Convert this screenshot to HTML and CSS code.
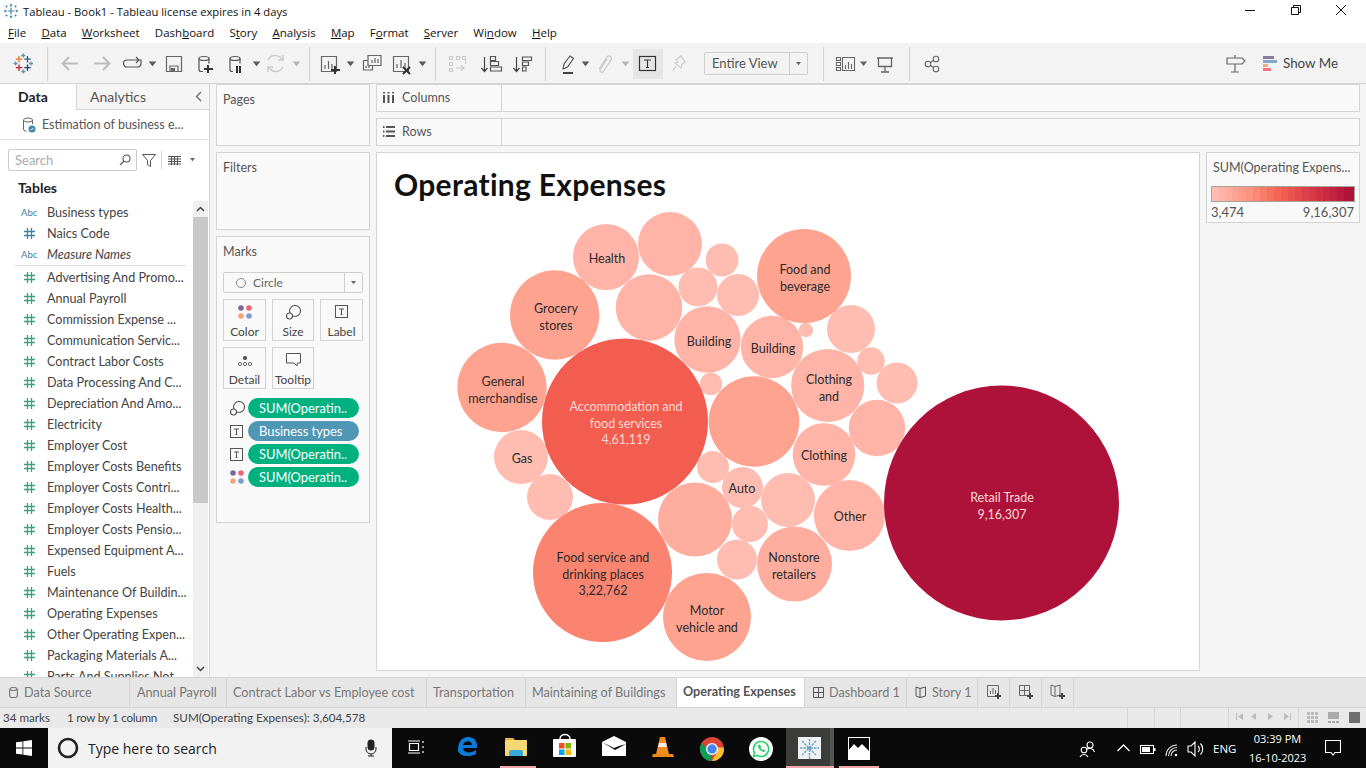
FILE: index.html
```html
<!DOCTYPE html>
<html lang="en">
<head>
<meta charset="utf-8">
<title>Tableau - Book1</title>
<link rel="stylesheet" href="styles.css">
</head>
<body>
<svg class="defs" width="0" height="0" aria-hidden="true">
  <defs>
    <g id="hash" fill="none" stroke-width="1.3"><path d="M3.500 0v11M7.500 0v11M0 3.500h11M0 7.500h11"/></g>
    <g id="tbox" fill="none" stroke="#555"><rect x=".5" y=".5" width="12" height="12"/><path d="M4 4h5M6.500 4v5.500M5.500 9.500h2" /></g>
    <g id="ring" fill="none" stroke="#555" stroke-width="1.100"><circle cx="9" cy="6" r="5.500"/><circle cx="3.500" cy="11" r="3" fill="#fafafa"/></g>
    <g id="dots"><circle cx="3" cy="3" r="2.800" fill="#7c6a96"/><circle cx="11" cy="3" r="2.800" fill="#f0657a"/><circle cx="3" cy="11" r="2.800" fill="#f2a578"/><circle cx="11" cy="11" r="2.800" fill="#7e9fcb"/></g>
    <path id="caret" d="M1 0h5l-2.500 3.200z" fill="#666"/>
  </defs>
</svg>

<header class="titlebar">
  <svg class="app-logo" width="14" height="14" viewBox="0 0 14 14" fill="none" stroke="#3f87ad" stroke-width="1.200"><path d="M7 3.500v7M3.500 7h7M7 0v2.500M5.800 1.200h2.400M7 11.500V14M5.800 12.800h2.400M0 7h2.500M1.200 5.800v2.400M11.500 7H14M12.800 5.800v2.400M2.500 1.500v2M1.500 2.500h2M11.500 1.500v2M10.500 2.500h2M2.500 10.500v2M1.500 11.500h2M11.500 10.500v2M10.500 11.500h2"/></svg>
  <span class="title-text">Tableau - Book1 - Tableau license expires in 4 days</span>
  <div class="winctl">
    <svg width="366" height="22" viewBox="1000 0 366 22" fill="none" stroke="#111"><path d="M1245 10.500h10"/><path d="M1291.500 7.500h7v7h-7zM1293.500 7.500v-2h7v7h-2"/><path d="M1336 5l10 10M1346 5l-10 10"/></svg>
  </div>
</header>

<nav class="menubar">
  <span><u>F</u>ile</span><span><u>D</u>ata</span><span><u>W</u>orksheet</span><span>Dash<u>b</u>oard</span><span>S<u>t</u>ory</span><span><u>A</u>nalysis</span><span><u>M</u>ap</span><span>F<u>o</u>rmat</span><span><u>S</u>erver</span><span>Wi<u>n</u>dow</span><span><u>H</u>elp</span>
</nav>

<div class="toolbar">
  <svg class="tb-a" width="700" height="41" viewBox="0 43 700 41" fill="none" stroke="#555" stroke-width="1.200">
    <g stroke-width="1.300">
      <path d="M19 56v6.500M15.800 59.200h6.500" stroke="#e8762b"/>
      <path d="M27.500 56v6.500M24.300 59.200h6.500" stroke="#2b5b84"/>
      <path d="M19 64.500V71M15.800 67.700h6.500" stroke="#c72035"/>
      <path d="M27.500 64.500V71M24.300 67.700h6.500" stroke="#1f447a"/>
      <path d="M23.300 53.500v4M21.300 55.500h4M23.300 69.500v4M21.300 71.500h4" stroke="#5f93a8"/>
      <path d="M15.500 61.500v4M13.500 63.500h4M31 61.500v4M29 63.500h4" stroke="#6f8fb0"/>
    </g>
    <path d="M47.500 47v34M309.500 47v34M435.500 47v34M545.500 47v34" stroke="#d4d4d4"/>
    <g stroke="#bdbdbd" stroke-width="2"><path d="M78 63.500H63M69 57l-6.500 6.500L69 70"/><path d="M94 63.500h15M103 57l6.500 6.500L103 70"/></g>
    <path d="M137 60h-10a3.500 3.500 0 0 0 0 7h11a3.500 3.500 0 0 0 3-3.500V60h-5M136 57l3 3-3 3"/>
    <use href="#caret" x="149" y="62"/>
    <path d="M166.500 56.500h15v15h-15zM170 71v-5h8v5" stroke="#666"/><rect x="171" y="68" width="4" height="3" fill="#666" stroke="none"/>
    <g><ellipse cx="204" cy="58.500" rx="5" ry="2"/><path d="M199 58.500v11a2 2 0 0 0 2 2h2M209 58.500v5"/></g>
    <path d="M208 65v8M204 69h9" stroke="#333" stroke-width="2"/>
    <ellipse cx="235" cy="58.500" rx="5" ry="2"/><path d="M230 58.500v11a2 2 0 0 0 2 2h1M240 58.500v5"/>
    <path d="M237 66v7M240 66v7" stroke="#333" stroke-width="2"/>
    <use href="#caret" x="253" y="62"/>
    <g stroke="#ccc" stroke-width="1.500"><path d="M268 60a8 8 0 0 1 13-2l2 2M283 67a8 8 0 0 1-13 2l-2-2M283 55v5h-5M268 72v-5h5"/></g>
    <use href="#caret" x="293" y="62" opacity=".4"/>
    <path d="M321.500 56.500h15v15h-15zM325 69v-4M328.500 69v-8M332 69v-5" stroke="#666"/>
    <path d="M335 66v8M331 70h9" stroke="#333" stroke-width="2"/>
    <use href="#caret" x="347" y="62"/>
    <path d="M368 55.500h13v10h-13zM372 63v-3M375 63v-5M378 63v-4" stroke="#666"/><path d="M363.500 60.500H368M363.500 60.500v9.500h9v-4M366 68v-2M369 68v-2" stroke="#666"/>
    <path d="M393.500 56.500h15v15h-15zM397 68v-4M401 68v-8M405 68v-5" stroke="#666"/>
    <path d="M403 67l7 7M410 67l-7 7" stroke="#333" stroke-width="2"/>
    <use href="#caret" x="419" y="62"/>
    <g stroke="#ccc"><path d="M449.500 56.500h3v3h-3zM449.500 62.500h3v3h-3zM449.500 68.500h3v3h-3zM456.500 56.500h3v3h-3zM462.500 56.500h3v3h-3zM456 68h8M461 65.500l3 2.500-3 2.500M465.500 60v4"/></g>
    <path d="M484.500 57v14M481.500 68l3 3.500 3-3.500" stroke="#444"/><path d="M490.500 56.500h5v4h-5zM490.500 61.500h8v4h-8zM490.500 67h11v4h-11z"/>
    <path d="M516.500 57v14M513.500 68l3 3.500 3-3.500" stroke="#444"/><path d="M522.500 57h9v3.500h-9zM522.500 62h6v3.500h-6zM522.500 67h3.500v4h-3.500z"/>
    <path d="M563 73h10" stroke="#444" stroke-width="2"/><path d="M563 69l1-5 6-8 3.500 2.500-6 8.500-4 2z"/>
    <use href="#caret" x="582" y="62"/>
    <path d="M599 69l8-12a2.500 2.500 0 0 1 4 3l-8 12a2 2 0 0 1-3-2l7-11" stroke="#ccc" stroke-width="1.300"/>
    <use href="#caret" x="622" y="62" opacity=".4"/>
    <rect x="633" y="49" width="30" height="30" fill="#e6e6e6" stroke="none"/>
    <rect x="639.500" y="56.500" width="16" height="14" stroke="#333"/><path d="M644 60h7M647.500 60v7.500M646 67.500h3" stroke="#333"/>
    <path d="M676 60l5-4 4 6-3 2-1 4-6-5 3-1zM676 66l-3 5" stroke="#ccc"/>
  </svg>
  <div class="fit-combo"><span class="fit-label">Entire View</span><span class="fit-btn"><svg width="7" height="4"><use href="#caret"/></svg></span></div>
  <svg class="tb-b" width="140" height="41" viewBox="810 43 140 41" fill="none" stroke="#666" stroke-width="1.100">
    <path d="M823.500 47v34M909.500 47v34" stroke="#d4d4d4"/>
    <path d="M836.500 57.500h4v3h-4zM836.500 62.500h4v3h-4zM836.500 67.500h4v3h-4zM842.500 57.500h12v13h-12z"/><path d="M845.500 69v-4M848.500 69v-7M851.500 69v-5"/>
    <use href="#caret" x="860" y="62"/>
    <path d="M877 58h16M878.500 58v8.500h13V58M885 66.500v5.500M881 72h8" stroke-width="1.300"/>
    <circle cx="928" cy="64" r="2.800"/><circle cx="936" cy="59" r="2.800"/><circle cx="936" cy="69" r="2.800"/><path d="M930.500 62.500l3-2M930.500 65.500l3 2"/>
  </svg>
  <div class="tb-right">
    <svg width="60" height="41" viewBox="1222 43 60 41" fill="none" stroke="#666" stroke-width="1.200">
      <path d="M1227 58h15l3 3-3 3h-15zM1235 55v3M1235 64v8M1231 72h8"/>
      <rect x="1263" y="56" width="11" height="3" fill="#8b7ba0" stroke="none"/><rect x="1263" y="60" width="14" height="3" fill="#85a5cd" stroke="none"/><rect x="1263" y="64" width="5" height="3" fill="#f4ab7f" stroke="none"/><rect x="1263" y="68" width="8" height="3" fill="#f5727f" stroke="none"/>
    </svg>
    <span class="showme">Show Me</span>
  </div>
</div>

<main class="main">
  <aside class="sidebar">
    <div class="side-tabs">
      <div class="side-tab active">Data</div>
      <div class="side-tab">Analytics<svg class="collapse" width="7" height="11" viewBox="0 0 7 11" fill="none" stroke="#666" stroke-width="1.200"><path d="M6 1L1.500 5.500 6 10"/></svg></div>
    </div>
    <div class="source">
      <svg width="14" height="16" viewBox="0 0 14 16" fill="none" stroke="#666"><ellipse cx="6" cy="3" rx="4.500" ry="2"/><path d="M1.500 3v9a2 2 0 0 0 2 2h1M10.500 3v4"/><circle cx="10" cy="12" r="3.500" fill="#3f87ad" stroke="none"/><path d="M8.500 12l1 1 2-2" stroke="#fff"/></svg>
      <span>Estimation of business e...</span>
    </div>
    <div class="searchrow">
      <div class="searchbox"><span>Search</span><svg width="12" height="12" viewBox="0 0 12 12" fill="none" stroke="#555" stroke-width="1.100"><circle cx="7.500" cy="4.500" r="3.500"/><path d="M5 7l-4 4"/></svg></div>
      <svg class="funnel" width="14" height="13" viewBox="0 0 14 13" fill="none" stroke="#555"><path d="M.5 .5h13L8.500 6.500V12.500L5.500 10.500V6.500z"/></svg>
      <span class="vsep"></span>
      <svg class="listicon" width="13" height="9" viewBox="0 0 13 9" fill="none" stroke="#555"><path d="M0 .5h13M0 3h13M0 5.500h13M0 8h13M3.500 0v9M6.500 0v9M9.500 0v9"/></svg>
      <svg class="listcaret" width="7" height="4"><use href="#caret"/></svg>
    </div>
    <div class="tables-h">Tables</div>
    <div class="fields-wrap">
      <div class="fields">
        <div class="field"><span class="abc">Abc</span>Business types</div>
        <div class="field"><svg class="fi dim" width="11" height="11"><use href="#hash"/></svg>Naics Code</div>
        <div class="field ital"><span class="abc">Abc</span>Measure Names</div>
        <div class="divider"></div>
        <div class="field"><svg class="fi" width="11" height="11"><use href="#hash"/></svg>Advertising And Promo...</div>
        <div class="field"><svg class="fi" width="11" height="11"><use href="#hash"/></svg>Annual Payroll</div>
        <div class="field"><svg class="fi" width="11" height="11"><use href="#hash"/></svg>Commission Expense ...</div>
        <div class="field"><svg class="fi" width="11" height="11"><use href="#hash"/></svg>Communication Servic...</div>
        <div class="field"><svg class="fi" width="11" height="11"><use href="#hash"/></svg>Contract Labor Costs</div>
        <div class="field"><svg class="fi" width="11" height="11"><use href="#hash"/></svg>Data Processing And C...</div>
        <div class="field"><svg class="fi" width="11" height="11"><use href="#hash"/></svg>Depreciation And Amo...</div>
        <div class="field"><svg class="fi" width="11" height="11"><use href="#hash"/></svg>Electricity</div>
        <div class="field"><svg class="fi" width="11" height="11"><use href="#hash"/></svg>Employer Cost</div>
        <div class="field"><svg class="fi" width="11" height="11"><use href="#hash"/></svg>Employer Costs Benefits</div>
        <div class="field"><svg class="fi" width="11" height="11"><use href="#hash"/></svg>Employer Costs Contri...</div>
        <div class="field"><svg class="fi" width="11" height="11"><use href="#hash"/></svg>Employer Costs Health...</div>
        <div class="field"><svg class="fi" width="11" height="11"><use href="#hash"/></svg>Employer Costs Pensio...</div>
        <div class="field"><svg class="fi" width="11" height="11"><use href="#hash"/></svg>Expensed Equipment A...</div>
        <div class="field"><svg class="fi" width="11" height="11"><use href="#hash"/></svg>Fuels</div>
        <div class="field"><svg class="fi" width="11" height="11"><use href="#hash"/></svg>Maintenance Of Buildin...</div>
        <div class="field"><svg class="fi" width="11" height="11"><use href="#hash"/></svg>Operating Expenses</div>
        <div class="field"><svg class="fi" width="11" height="11"><use href="#hash"/></svg>Other Operating Expen...</div>
        <div class="field"><svg class="fi" width="11" height="11"><use href="#hash"/></svg>Packaging Materials A...</div>
        <div class="field"><svg class="fi" width="11" height="11"><use href="#hash"/></svg>Parts And Supplies Not...</div>
      </div>
      <div class="scrollbar">
        <div class="sb-btn"><svg width="9" height="6" viewBox="0 0 9 6" fill="none" stroke="#444" stroke-width="1.500"><path d="M1 5l3.500-3.500L8 5"/></svg></div>
        <div class="sb-track"><div class="sb-thumb"></div></div>
        <div class="sb-btn"><svg width="9" height="6" viewBox="0 0 9 6" fill="none" stroke="#444" stroke-width="1.500"><path d="M1 1l3.500 3.500L8 1"/></svg></div>
      </div>
    </div>
  </aside>

  <section class="cards">
    <div class="card pages"><div class="card-h">Pages</div></div>
    <div class="card filters"><div class="card-h">Filters</div></div>
    <div class="card marks">
      <div class="card-h">Marks</div>
      <div class="marktype">
        <span class="mt-label"><i class="mt-ring"></i>Circle</span>
        <span class="mt-btn"><svg width="7" height="4"><use href="#caret"/></svg></span>
      </div>
      <div class="markbtns">
        <div class="mbtn"><svg width="14" height="14"><use href="#dots"/></svg><span>Color</span></div>
        <div class="mbtn"><svg width="15" height="15"><use href="#ring"/></svg><span>Size</span></div>
        <div class="mbtn"><svg width="13" height="13"><use href="#tbox"/></svg><span>Label</span></div>
        <div class="mbtn"><svg width="14" height="14" viewBox="0 0 14 14" fill="none" stroke="#555" stroke-width=".9"><circle cx="7" cy="5" r="1.700" fill="#555"/><circle cx="2" cy="11" r="1.600"/><circle cx="7" cy="11" r="1.600"/><circle cx="12" cy="11" r="1.600"/></svg><span>Detail</span></div>
        <div class="mbtn"><svg width="15" height="14" viewBox="0 0 15 14" fill="none" stroke="#555"><path d="M.5 .5h14v9.500h-3l-.5 3-3-3h-7.500z"/></svg><span>Tooltip</span></div>
      </div>
      <div class="pills">
        <div class="pillrow"><svg width="15" height="15"><use href="#ring"/></svg><span class="pill green">SUM(Operatin..</span></div>
        <div class="pillrow"><svg width="13" height="13"><use href="#tbox"/></svg><span class="pill blue">Business types</span></div>
        <div class="pillrow"><svg width="13" height="13"><use href="#tbox"/></svg><span class="pill green">SUM(Operatin..</span></div>
        <div class="pillrow"><svg width="14" height="14"><use href="#dots"/></svg><span class="pill green">SUM(Operatin..</span></div>
      </div>
    </div>
  </section>

  <section class="work">
    <div class="shelf"><div class="shelf-h"><svg width="12" height="11" viewBox="0 0 12 11" fill="#555"><rect width="2" height="8" x="0" y="3"/><rect width="2" height="8" x="4.500" y="3"/><rect width="2" height="8" x="9" y="3"/><rect width="2" height="1.500" x="0"/><rect width="2" height="1.500" x="4.500"/><rect width="2" height="1.500" x="9"/></svg>Columns</div></div>
    <div class="shelf"><div class="shelf-h"><svg width="12" height="11" viewBox="0 0 12 11" fill="#555"><rect width="9" height="2" x="3" y="0"/><rect width="9" height="2" x="3" y="4.500"/><rect width="9" height="2" x="3" y="9"/><rect width="1.500" height="2" y="0"/><rect width="1.500" height="2" y="4.500"/><rect width="1.500" height="2" y="9"/></svg>Rows</div></div>
    <div class="viewrow">
      <div class="chart">
        <h1 class="viz-title">Operating Expenses</h1>
        <svg class="bubbles" width="822" height="517" viewBox="377 153 822 517">
          <g class="c1">
            <circle cx="670" cy="244" r="32"/><circle cx="606" cy="257" r="33"/><circle cx="649" cy="307.500" r="33.300"/><circle cx="707.500" cy="339.500" r="33.200"/><circle cx="772" cy="347" r="31.200"/><circle cx="827.700" cy="385.500" r="36.600"/><circle cx="877" cy="428" r="28.200"/><circle cx="824" cy="454.500" r="31.300"/><circle cx="849.500" cy="515.500" r="35.500"/>
          </g>
          <g class="c1b"><circle cx="695" cy="519.500" r="37"/><circle cx="794.500" cy="564" r="37.500"/></g>
          <g class="c0">
            <circle cx="722" cy="260" r="16.500"/><circle cx="698" cy="287" r="19.500"/><circle cx="738" cy="295" r="21"/><circle cx="806" cy="330" r="7.200"/><circle cx="851" cy="329" r="24"/><circle cx="871" cy="361" r="13.700"/><circle cx="897" cy="383" r="20.500"/><circle cx="711" cy="384" r="11.200"/><circle cx="521" cy="457" r="27"/><circle cx="550" cy="497" r="23"/><circle cx="713" cy="467" r="16"/><circle cx="742.500" cy="487.500" r="20.500"/><circle cx="788" cy="500" r="27"/><circle cx="750" cy="524" r="18"/><circle cx="737" cy="559.500" r="20"/>
          </g>
          <g class="c2">
            <circle cx="502" cy="387.500" r="44.700"/><circle cx="554.700" cy="315" r="44.700"/><circle cx="804" cy="276" r="47"/><circle cx="754" cy="421.500" r="45.300"/><circle cx="707" cy="617" r="44"/>
          </g>
          <circle class="c3" cx="602.500" cy="572.500" r="69.500"/>
          <circle class="c4" cx="625" cy="421.500" r="83"/>
          <circle class="c5" cx="1001.500" cy="503" r="117.500"/>
          <g class="lbl" transform="translate(0 1)">
            <text x="607" y="262">Health</text>
            <text x="805" y="273">Food and</text><text x="805" y="290">beverage</text>
            <text x="556" y="312">Grocery</text><text x="556" y="329">stores</text>
            <text x="709" y="345">Building</text><text x="773" y="352">Building</text>
            <text x="503" y="385">General</text><text x="503" y="402">merchandise</text>
            <text x="829" y="383">Clothing</text><text x="829" y="400">and</text>
            <text x="522" y="462">Gas</text><text x="824" y="459">Clothing</text><text x="742" y="492">Auto</text><text x="850" y="520">Other</text>
            <text x="603" y="561">Food service and</text><text x="603" y="578">drinking places</text><text x="603" y="594">3,22,762</text>
            <text x="794" y="561">Nonstore</text><text x="794" y="578">retailers</text>
            <text x="707" y="614">Motor</text><text x="707" y="631">vehicle and</text>
          </g>
          <g class="lbl light" transform="translate(0 1)">
            <text x="626" y="410">Accommodation and</text><text x="626" y="427">food services</text><text x="626" y="443">4,61,119</text>
            <text x="1002" y="501">Retail Trade</text><text x="1002" y="518">9,16,307</text>
          </g>
        </svg>
      </div>
      <div class="legend">
        <div class="legend-h">SUM(Operating Expens...</div>
        <svg class="ramp" width="144" height="16" viewBox="0 0 144 16">
          <g><rect x="0" width="8" height="16" fill="#ffbdb2"/><rect x="7" width="8" height="16" fill="#ffb5a9"/><rect x="14" width="8" height="16" fill="#ffac9e"/><rect x="21" width="8" height="16" fill="#ffa494"/><rect x="28" width="8" height="16" fill="#fd9a88"/><rect x="35" width="8" height="16" fill="#fc927f"/><rect x="42" width="8" height="16" fill="#fa8875"/><rect x="49" width="8" height="16" fill="#f87c6a"/><rect x="56" width="8" height="16" fill="#f5715f"/><rect x="63" width="8" height="16" fill="#f36655"/><rect x="70" width="8" height="16" fill="#f15d4e"/><rect x="77" width="8" height="16" fill="#e95350"/><rect x="84" width="8" height="16" fill="#e34a4c"/><rect x="91" width="8" height="16" fill="#dc414a"/><rect x="98" width="8" height="16" fill="#d63a47"/><rect x="105" width="8" height="16" fill="#d03244"/><rect x="112" width="8" height="16" fill="#c92a41"/><rect x="119" width="8" height="16" fill="#c2233e"/><rect x="126" width="8" height="16" fill="#ba1b3c"/><rect x="133" width="11" height="16" fill="#b0133a"/></g>
          <rect x=".5" y=".5" width="143" height="15" fill="none" stroke="#a8a398"/>
        </svg>
        <div class="legend-vals"><span>3,474</span><span>9,16,307</span></div>
      </div>
    </div>
  </section>
</main>

<div class="tabstrip">
  <div class="tab w-ds"><svg width="9" height="11" viewBox="0 0 9 11" fill="none" stroke="#666"><ellipse cx="4.500" cy="2" rx="3.800" ry="1.500"/><path d="M.7 2v7a1.500 1.500 0 0 0 1.500 1.500h4.600A1.500 1.500 0 0 0 8.300 9V2"/></svg>Data Source</div>
  <div class="tab w-ap">Annual Payroll</div>
  <div class="tab w-cl">Contract Labor vs Employee cost</div>
  <div class="tab w-tr">Transportation</div>
  <div class="tab w-mb">Maintaining of Buildings</div>
  <div class="tab w-oe active">Operating Expenses</div>
  <div class="tab w-db"><svg width="11" height="11" viewBox="0 0 11 11" fill="none" stroke="#555"><path d="M.5 .5h10v10H.5zM5.500 .5v10M.5 5.500h10"/></svg>Dashboard 1</div>
  <div class="tab w-st"><svg width="12" height="12" viewBox="0 0 12 12" fill="none" stroke="#555"><path d="M1 1l4 1.500L10.500 1v9L5 11.500 1 10zM5 2.500v9"/></svg>Story 1</div>
  <div class="tab w-nw"><svg width="16" height="16" viewBox="0 0 16 16" fill="none" stroke="#666"><path d="M1.500 1.500h11v11h-11zM4.500 10V7M7 10V4M9.500 10V6"/><path d="M12 9v6M9 12h6" stroke="#444" stroke-width="2"/></svg></div>
  <div class="tab w-nw"><svg width="16" height="16" viewBox="0 0 16 16" fill="none" stroke="#666"><path d="M1.500 1.500h10v10h-10zM6.500 1.500v10M1.500 6.500h10"/><path d="M12 9v6M9 12h6" stroke="#444" stroke-width="2"/></svg></div>
  <div class="tab w-nw"><svg width="16" height="16" viewBox="0 0 16 16" fill="none" stroke="#666"><path d="M1 1l4 1.500L10 1v10l-5 1.500L1 11zM5 2.500v10"/><path d="M12 9v6M9 12h6" stroke="#444" stroke-width="2"/></svg></div>
</div>

<div class="status">
  <span class="st-a">34 marks</span><span class="st-b">1 row by 1 column</span><span class="st-c">SUM(Operating Expenses): 3,604,578</span>
  <svg class="st-icons" width="240" height="20" viewBox="1126 708 240 20" fill="#bbb">
    <path d="M1127.500 708v20M1154.500 708v20M1180.500 708v20M1228.500 708v20M1298.500 708v20" stroke="#d4d4d4" fill="none"/>
    <path d="M1236 713v7h1v-7zM1243 713l-5 3.500 5 3.500zM1256 713l-5 3.500 5 3.500zM1268 713l5 3.500-5 3.500zM1284 713l5 3.500-5 3.500zM1290 713v7h1v-7z"/>
    <path d="M1307 712h3v3h-3zM1311 712h3v3h-3zM1315 712h3v3h-3zM1307 716h3v3h-3zM1311 716h3v3h-3zM1315 716h3v3h-3zM1307 720h3v3h-3zM1311 720h3v3h-3zM1315 720h3v3h-3z" fill="#bbb"/>
    <path d="M1328 712h11v7h-11zM1328 721h3v2h-3zM1332 721h3v2h-3zM1336 721h3v2h-3z" fill="#aaa"/>
    <rect x="1349" y="712" width="11" height="11" fill="#6e6e6e"/>
  </svg>
</div>

<footer class="taskbar">
  <div class="start"><svg width="16" height="16" viewBox="0 0 16 16" fill="#fff"><path d="M0 2.300l6.500-.9v6.200H0zM7.300 1.300L16 0v7.600H7.300zM0 8.400h6.500v6.200L0 13.700zM7.300 8.400H16V16l-8.700-1.200z"/></svg></div>
  <div class="tsearch">
    <svg class="cortana" width="22" height="22" viewBox="0 0 22 22" fill="none" stroke="#222" stroke-width="2.600"><circle cx="11" cy="11" r="9"/></svg>
    <span>Type here to search</span>
    <svg class="mic" width="12" height="18" viewBox="0 0 12 18" fill="none" stroke="#222"><rect x="3" y="1" width="6" height="10" rx="2.500" fill="#222"/><path d="M1 8v2a5 5 0 0 0 10 0V8M6 15v2M3 17h6"/></svg>
  </div>
  <svg class="tapps" width="500" height="40" viewBox="392 728 500 40">
    <g fill="none" stroke="#fff" stroke-width="1.200"><path d="M409.500 743.500h9v7h-9zM408 741h12M408 753h12M423 741v2M423 746v2M423 751v2"/></g>
    <path d="M458 750c0-8 4-13 10-13 6 0 9 4 9 9v2h-14c.5 5 8 6 13 2v4c-7 4-18 2-18-4zm5-5h9c0-5-8-5-9 0z" fill="#0a7bd6"/>
    <rect x="505" y="740" width="22" height="16" rx="1" fill="#f8d775"/><path d="M505 738h8l2 2h-10z" fill="#e7b53d"/><path d="M509 756v-4a2 2 0 0 1 2-2h10a2 2 0 0 1 2 2v4z" fill="#39a9dc"/>
    <rect x="553" y="739" width="23" height="18" rx="1" fill="#fff"/><path d="M560 739c0-6 10-6 10 0" fill="none" stroke="#fff" stroke-width="1.500"/><rect x="559" y="743" width="5.500" height="5.500" fill="#f25022"/><rect x="565.500" y="743" width="5.500" height="5.500" fill="#7fba00"/><rect x="559" y="749.500" width="5.500" height="5.500" fill="#00a4ef"/><rect x="565.500" y="749.500" width="5.500" height="5.500" fill="#ffb900"/>
    <path d="M602 742l12-6 12 6v14h-24z" fill="#fff"/><path d="M602 742l13 8 11-6-7 2-5 2z" fill="#0a0a0a"/>
    <path d="M660 737h5l4 17h-13z" fill="#f28c1e"/><path d="M659 743h7l1 4h-9z" fill="#eee"/><path d="M653 754h20l1 3h-22z" fill="#ee8a1a"/>
    <circle cx="712" cy="749" r="12" fill="#db4437"/><path d="M712 761a12 12 0 0 1-10.400-18L708 749l4 6z" fill="#0f9d58"/><path d="M724 749a12 12 0 0 1-12 12l4.500-8 1-5.500h6z" fill="#fbc02d"/><circle cx="712" cy="749" r="6" fill="#fff"/><circle cx="712" cy="749" r="4.700" fill="#4285f4"/>
    <circle cx="761" cy="749" r="12" fill="#fff"/><path d="M761 741.500a7.500 7.500 0 0 0-6.500 11.200l-1 3.800 3.900-1a7.500 7.500 0 1 0 3.600-14z" fill="none" stroke="#25d366" stroke-width="1.600"/><path d="M758 745c-1 2 3 7 6 7l1.500-1.500-2-1.300-1 .7-2-2 .7-1-1.300-2.400z" fill="#25d366"/>
    <rect x="786" y="728" width="44" height="40" fill="#3c3c3a"/><rect x="830" y="728" width="4" height="40" fill="#555"/>
    <rect x="798" y="737" width="23" height="22" fill="#edf1f4"/><g stroke="#6ba3c4" stroke-width="1.400" stroke-dasharray="2.500 1"><path d="M809.500 739v20M800 748h19M802 741l14 14M816 741l-14 14"/></g>
    <rect x="848.500" y="737.500" width="21" height="22" fill="#0a0a0a" stroke="#fff"/><path d="M848 759v-8l6-7 4 4 4-4 8 8v7z" fill="#fff"/>
    <rect x="500" y="766" width="36" height="2" fill="#f4a6ac"/><rect x="786" y="766" width="48" height="2" fill="#f4a6ac"/><rect x="839" y="766" width="40" height="2" fill="#f4a6ac"/>
  </svg>
  <div class="tray">
    <svg width="136" height="40" viewBox="1078 728 136 40" fill="none" stroke="#fff" stroke-width="1.100">
      <circle cx="1090" cy="745" r="3"/><circle cx="1084" cy="750" r="2.800"/><path d="M1080 757a4.500 4.500 0 0 1 8 0M1086 750a5 5 0 0 1 8.500 2"/>
      <path d="M1117.500 751l6-6 6 6" stroke-width="1.300"/>
      <rect x="1140.500" y="745.500" width="13" height="8"/><rect x="1142" y="747" width="8" height="5" fill="#fff" stroke="none"/><rect x="1154" y="748" width="1.500" height="3" fill="#fff" stroke="none"/>
      <path d="M1166 756a11 11 0 0 1 11-11M1168.500 756a8.500 8.500 0 0 1 8.500-8.500M1171 756a6 6 0 0 1 6-6" stroke="#ddd"/><circle cx="1176" cy="755" r="1.300" fill="#fff" stroke="none"/>
      <path d="M1188 746v6h3l4 4v-14l-4 4zM1198 746a4 4 0 0 1 0 6M1200.500 743.500a8 8 0 0 1 0 11"/>
    </svg>
    <span class="eng">ENG</span>
    <div class="clock"><div>03:39 PM</div><div>16-10-2023</div></div>
    <svg class="notif" width="16" height="16" viewBox="0 0 16 16" fill="none" stroke="#fff" stroke-width="1.100"><path d="M.5 .5h15v12h-5.500L8 15l-2-2.500H.5z"/></svg>
  </div>
</footer>
</body>
</html>
```
FILE: styles.css
```css
* { box-sizing: border-box; }
html, body { margin: 0; padding: 0; }
body {
  width: 1366px; height: 768px; overflow: hidden;
  background: #f5f5f5; color: #333;
  font-family: "Lato", "Open Sans", sans-serif; font-size: 13px;
  display: flex; flex-direction: column;
}
.defs { position: absolute; }
svg { display: block; flex: none; }

.titlebar { height: 22px; background: #fff; display: flex; align-items: center; padding-left: 4px; position: relative; font-family: "Open Sans", sans-serif; font-size: 11.25px; color: #111; }
.app-logo { margin-right: 5px; }
.winctl { position: absolute; right: 0; top: 0; }

.menubar { height: 21px; background: #fff; display: flex; align-items: center; gap: 15.2px; padding-left: 8px; font-family: "Open Sans", sans-serif; font-size: 11.5px; color: #111; }

.toolbar { height: 41px; background: #f3f3f3; border-bottom: 1px solid #d4d4d4; display: flex; align-items: flex-start; }
.tb-a { margin-right: 4px; }
.fit-combo { width: 104px; height: 23px; margin-top: 9px; display: flex; border: 1px solid #cfcfcf; border-radius: 2px; font-size: 13px; color: #555; }
.fit-label { flex: 1; padding-left: 7px; line-height: 20px; }
.fit-btn { width: 18px; border-left: 1px solid #cfcfcf; display: flex; align-items: center; justify-content: center; }
.tb-b { margin-left: 2px; }
.tb-right { margin-left: auto; display: flex; align-items: flex-start; width: 144px; }
.showme { margin-top: 12px; margin-left: 1px; font-size: 13.4px; color: #444; }

.main { height: 593px; display: flex; align-items: stretch; }

.sidebar { width: 210px; background: #fff; border-right: 1px solid #d4d4d4; display: flex; flex-direction: column; }
.side-tabs { height: 26px; display: flex; flex: none; }
.side-tab { position: relative; line-height: 26px; font-size: 14px; background: #f5f5f5; border-bottom: 1px solid #d4d4d4; flex: 1; padding-left: 13px; color: #555; }
.side-tab.active { flex: 0 0 77px; background: #fff; border-bottom: 0; border-right: 1px solid #d4d4d4; padding-left: 18px; font-weight: 700; color: #222; }
.collapse { position: absolute; right: 7px; top: 7px; }
.source { height: 30px; flex: none; display: flex; align-items: center; gap: 6px; padding-left: 22px; border-bottom: 1px solid #e2e2e2; font-size: 12.5px; color: #555; }
.searchrow { height: 22px; margin-top: 9px; flex: none; display: flex; align-items: center; padding-left: 8px; }
.searchbox { width: 129px; height: 22px; border: 1px solid #ccc; border-radius: 2px; display: flex; align-items: center; justify-content: space-between; padding: 0 5px 0 6px; color: #aaa; font-size: 13px; }
.funnel { margin-left: 5px; }
.vsep { width: 1px; height: 18px; background: #d4d4d4; margin: 0 6px 0 5px; }
.listcaret { margin-left: 8px; }
.tables-h { flex: none; padding-left: 18px; margin-top: 8px; line-height: 18px; font-weight: 700; font-size: 14px; color: #222; }
.fields-wrap { flex: 1; min-height: 0; position: relative; overflow: hidden; display: flex; margin-top: 4px; }
.fields { width: 193px; flex: none; padding-top: 1px; }
.field { height: 21px; display: flex; align-items: center; font-size: 12.6px; color: #444; white-space: nowrap; overflow: hidden; padding-left: 0; }
.field.ital { font-style: italic; }
.abc { width: 47px; flex: none; padding-left: 21px; font-size: 9.5px; color: #3f7f9f; font-style: normal; }
.fi { margin-left: 24px; margin-right: 12px; stroke: #3f9f7f; }
.fi.dim { stroke: #3f7f9f; }
.divider { height: 1px; background: #dcdcdc; margin: 0 0 1px 15px; width: 171px; }
.scrollbar { width: 15px; margin-left: 0; display: flex; flex-direction: column; background: #f0f0f0; }
.sb-btn { height: 16px; display: flex; align-items: center; justify-content: center; flex: none; }
.sb-track { flex: 1; }
.sb-thumb { height: 286px; background: #c8c8c8; }

.cards { width: 154px; margin-left: 6px; display: flex; flex-direction: column; gap: 6px; flex: none; }
.card { background: #f9f9f9; border: 1px solid #d4d4d4; flex: none; }
.card-h { padding: 7px 0 0 6px; font-size: 12.5px; line-height: 16px; color: #555; }
.pages { height: 62px; }
.filters { height: 78px; }
.marks { height: 287px; }
.marktype { margin: 12px 6px 0; height: 21px; border: 1px solid #cfcfcf; display: flex; border-radius: 2px; font-size: 12px; color: #666; }
.mt-label { flex: 1; display: flex; align-items: center; padding-left: 12px; }
.mt-ring { width: 10px; height: 10px; border-radius: 50%; border: 1px solid #888; margin-right: 7px; }
.mt-btn { width: 18px; border-left: 1px solid #cfcfcf; display: flex; align-items: center; justify-content: center; }
.markbtns { margin: 6px 0 0 6px; display: grid; grid-template-columns: 43px 42px 43px; column-gap: 6px; row-gap: 6px; }
.mbtn { height: 42px; border: 1px solid #d4d4d4; display: flex; flex-direction: column; align-items: center; padding-top: 5px; font-size: 12px; color: #444; }
.mbtn span { position: absolute; margin-top: 19px; }
.pills { margin: 9px 0 0 13px; display: flex; flex-direction: column; gap: 3px; }
.pillrow { width: 129px; height: 20px; display: flex; align-items: center; }
.pillrow svg { width: 15px; margin-right: 3px; }
.pillrow .pill { margin-left: auto; }
.pill { width: 111px; height: 20px; border-radius: 10px; color: #fff; font-size: 12.9px; line-height: 20px; padding-left: 11px; white-space: nowrap; }
.green { background: #00b180; }
.blue { background: #4f97b5; }

.work { width: 984px; margin-left: 6px; display: flex; flex-direction: column; gap: 6px; flex: none; }
.shelf { height: 28px; background: #f9f9f9; border: 1px solid #d4d4d4; flex: none; }
.shelf-h { width: 125px; height: 26px; border-right: 1px solid #d4d4d4; display: flex; align-items: center; gap: 7px; padding: 0 0 2px 6px; font-size: 12.6px; color: #555; }
.viewrow { display: flex; gap: 6px; flex: none; height: 519px; align-items: flex-start; }
.chart { width: 824px; height: 519px; background: #fff; border: 1px solid #d4d4d4; position: relative; flex: none; }
.viz-title { margin: 0; padding: 13px 0 0 17px; font-size: 30px; letter-spacing: .28px; line-height: 36px; font-weight: 700; color: #111; font-family: "Lato", sans-serif; }
.bubbles { position: absolute; left: 0; top: 0; }
.c0 { fill: #ffbdb2; }
.c1 { fill: #ffb4a7; }
.c1b { fill: #ffad9e; }
.c2 { fill: #ffa391; }
.c3 { fill: #fb8470; }
.c4 { fill: #f25d4f; }
.c5 { fill: #ae123a; }
.lbl { font-family: "Lato", sans-serif; font-size: 12.5px; fill: #2b2b2b; text-anchor: middle; }
.lbl.light { fill: #fbd9d3; }
.legend { width: 154px; height: 71px; background: #f9f9f9; border: 1px solid #d4d4d4; flex: none; padding: 7px 4px 0; }
.legend-h { height: 26px; line-height: 16px; padding-left: 2px; font-size: 12.5px; color: #555; white-space: nowrap; }
.legend-vals { display: flex; justify-content: space-between; font-size: 13px; color: #555; margin-top: 2px; padding-right: 1px; line-height: 16px; }

.tabstrip { height: 31px; background: #e6e6e6; border-top: 1px solid #d4d4d4; border-bottom: 1px solid #d4d4d4; display: flex; flex: none; }
.tab { height: 29px; border-right: 1px solid #d4d4d4; display: flex; align-items: center; gap: 5px; padding: 0 0 1px 6px; font-size: 12.65px; color: #777; white-space: nowrap; flex: none; }
.tab.active { background: #fff; font-weight: 700; color: #555; align-items: flex-start; padding-top: 6px; }
.w-ds { width: 130px; padding-left: 9px; gap: 6px; }
.w-ap { width: 97px; padding-left: 7px; }
.w-cl { width: 200px; }
.w-tr { width: 99px; }
.w-mb { width: 151px; }
.w-oe { width: 128px; }
.w-db { width: 102px; padding-left: 8px; }
.w-st { width: 71px; padding-left: 8px; }
.w-nw { width: 32px; padding-left: 8px; }

.status { height: 20px; background: #e9e9e9; display: flex; align-items: center; padding-bottom: 1px; font-size: 11.65px; color: #444; position: relative; flex: none; }
.st-a { margin-left: 3px; width: 64px; }
.st-b { width: 106px; letter-spacing: -.25px; }
.st-icons { position: absolute; left: 1126px; top: 0; }

.taskbar { height: 40px; background: #0a0a0a; display: flex; flex: none; color: #fff; }
.start { width: 48px; display: flex; align-items: center; justify-content: center; }
.tsearch { width: 344px; background: #f2f2f2; display: flex; align-items: center; padding-left: 9px; color: #222; font-family: "Open Sans", sans-serif; font-size: 14px; }
.cortana { margin-right: 9px; }
.mic { margin-left: auto; margin-right: 15px; }
.tray { margin-left: auto; display: flex; align-items: center; width: 288px; font-family: "Open Sans", sans-serif; font-size: 11.5px; }
.eng { width: 31px; margin-left: -1px; }
.clock { width: 57px; margin-left: 5px; font-size: 11px; text-align: center; line-height: 19px; white-space: nowrap; }
.notif { margin-left: 19px; }
```
